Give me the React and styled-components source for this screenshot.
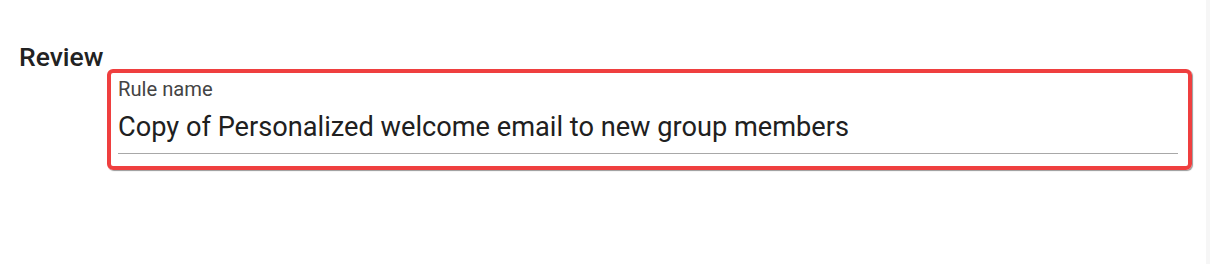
import React from "react";
import styled, { createGlobalStyle } from "styled-components";

const GlobalStyle = createGlobalStyle`
  html, body {
    margin: 0;
    padding: 0;
    background: #ffffff;
    font-family: Roboto, "Noto Sans", Arial, sans-serif;
  }
`;

const Page = styled.div`
  display: flex;
  height: 264px;
`;

const Main = styled.main`
  flex: 1;
  padding: 41px 14px 0 19px;
`;

const Gutter = styled.div`
  width: 4px;
  background: #f6f6f6;
`;

const Heading = styled.h2`
  margin: 0;
  font-size: 26.5px;
  line-height: 31px;
  font-weight: 500;
  color: #222222;
`;

const Field = styled.div`
  margin-left: 88px;
  margin-top: -3px;
  border: 4px solid #ef3f3f;
  border-radius: 6px;
  box-shadow: 1px 1px 1px rgba(0, 0, 0, 0.4);
  padding: 5px 10px 12px 7px;
`;

const Label = styled.label`
  display: block;
  font-size: 20.2px;
  line-height: 22px;
  color: #444444;
`;

const Value = styled.div`
  margin-top: 10px;
  font-size: 27.2px;
  line-height: 34px;
  color: #202020;
  padding-bottom: 9px;
  border-bottom: 1px solid #a8a8a8;
`;

export default function App() {
  return (
    <>
      <GlobalStyle />
      <Page>
        <Main>
          <Heading>Review</Heading>
          <Field>
            <Label>Rule name</Label>
            <Value>Copy of Personalized welcome email to new group members</Value>
          </Field>
        </Main>
        <Gutter />
      </Page>
    </>
  );
}
